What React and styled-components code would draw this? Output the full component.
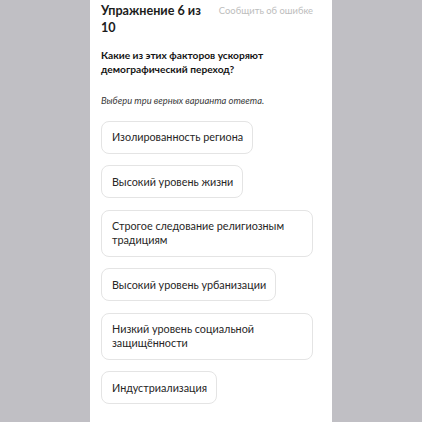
import React from "react";
import styled, { createGlobalStyle } from "styled-components";

const Global = createGlobalStyle`
  html, body { margin: 0; padding: 0; background: #c0bfc4; }
  body { font-family: "Lato", "Open Sans", sans-serif; }
`;

const Page = styled.div`
  display: flex;
  padding-left: 90px;
  min-height: 422px;
`;

const Panel = styled.div`
  width: 242px;
  background: #ffffff;
  padding: 2px 19px 18px 11px;
  box-sizing: border-box;
  min-height: 422px;
`;

const Header = styled.div`
  display: flex;
  justify-content: space-between;
  align-items: flex-start;
  gap: 8px;
`;

const Title = styled.h1`
  margin: 0;
  font-size: 12.6px;
  line-height: 17px;
  font-weight: 700;
  color: #1c1c1c;
  white-space: nowrap;
`;

const Report = styled.a`
  font-size: 9.4px;
  line-height: 17px;
  color: #bdbdbd;
  text-decoration: none;
  white-space: nowrap;
`;

const Question = styled.p`
  margin: 12px 0 0;
  font-size: 10.2px;
  line-height: 14px;
  font-weight: 700;
  color: #141414;
`;

const Hint = styled.p`
  margin: 18px 0 0;
  font-size: 9.4px;
  line-height: 14px;
  font-style: italic;
  color: #3a3a3a;
`;

const Options = styled.div`
  display: flex;
  flex-direction: column;
  align-items: flex-start;
  gap: 11.5px;
  margin-top: 12.5px;
`;

const Option = styled.button`
  font-family: inherit;
  text-align: left;
  background: #fff;
  border: 1px solid #e4e4e4;
  border-radius: 8px;
  padding: 8.5px 9px 8.5px 10px;
  font-size: 10.8px;
  line-height: 14px;
  color: #262626;
  max-width: 100%;
  cursor: pointer;
`;

const options = [
  "Изолированность региона",
  "Высокий уровень жизни",
  "Строгое следование религиозным традициям",
  "Высокий уровень урбанизации",
  "Низкий уровень социальной защищённости",
  "Индустриализация",
];

export default function App() {
  return (
    <>
      <Global />
      <Page>
        <Panel>
          <Header>
            <Title>
              Упражнение 6 из
              <br />
              10
            </Title>
            <Report href="#">Сообщить об ошибке</Report>
          </Header>
          <Question>Какие из этих факторов ускоряют демографический переход?</Question>
          <Hint>Выбери три верных варианта ответа.</Hint>
          <Options>
            {options.map((o) => (
              <Option key={o}>{o}</Option>
            ))}
          </Options>
        </Panel>
      </Page>
    </>
  );
}
